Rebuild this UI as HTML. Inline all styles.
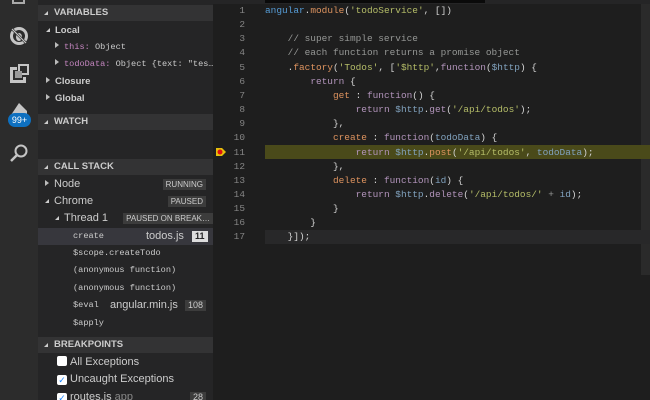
<!DOCTYPE html>
<html><head><meta charset="utf-8"><style>
*{margin:0;padding:0;box-sizing:border-box}
html,body{overflow:hidden}
body{width:650px;height:400px;background:#1e1e1e;font-family:"Liberation Sans",sans-serif;position:relative}
#act{position:absolute;left:0;top:0;width:38px;height:400px;background:#2c2c2c;overflow:hidden}
#side{position:absolute;left:38px;top:0;width:175px;height:400px;background:#252526;color:#ccc;font-size:11px;overflow:hidden}
.hdr{position:absolute;left:0;width:175px;height:16px;background:#333334;font-weight:bold;font-size:9.5px;color:#ccc;line-height:16px;padding-left:16px}
.hdr:before{content:"";position:absolute;left:6px;top:6px;border-left:4px solid transparent;border-bottom:4px solid #ccc}
.row{position:absolute;left:0;width:175px;height:17px;line-height:17px;white-space:nowrap;overflow:hidden}
.tri{display:inline-block;width:0;height:0;border-top:3px solid transparent;border-bottom:3px solid transparent;border-left:4px solid #bbb;margin-right:5px;vertical-align:1px}
.dn{display:inline-block;width:0;height:0;border-left:4px solid transparent;border-bottom:4px solid #ccc;margin-right:5px;vertical-align:1px}
.mono{font-family:"Liberation Mono",monospace;font-size:8.6px}
.badge{position:absolute;right:7px;top:3px;height:11px;line-height:11px;background:#3c3c3c;color:#ccc;font-size:8px;padding:0 3px}
.p{color:#c586c0}
#ed{position:absolute;left:213px;top:0;width:437px;height:400px;background:#1e1e1e;font-family:"Liberation Mono",monospace;font-size:9.45px;color:#d4d4d4;overflow:hidden}
.ln{position:absolute;left:0;width:32px;text-align:right;color:#858585}
.cl{position:absolute;left:52px;white-space:pre}
.k{color:#c586c0}.f{color:#ce9178}.s{color:#b5bd68}.v{color:#569cd6}.c{color:#969896}.o{color:#de935f}.pl{color:#b294bb}.b{color:#81a2be}
</style></head><body>
<div id="act">
<div style="position:absolute;left:12px;top:-6px;width:13px;height:10px;border:2px solid #aaa;border-top:none"></div>
<svg style="position:absolute;left:8px;top:25px" width="22" height="22" viewBox="0 0 22 22"><circle cx="11" cy="11" r="9" fill="#c5c5c5"/><circle cx="11" cy="11" r="6" fill="#2c2c2c"/><ellipse cx="11" cy="12" rx="3" ry="4" fill="#c5c5c5"/><line x1="4" y1="4" x2="18" y2="18" stroke="#2c2c2c" stroke-width="2.5"/><line x1="4" y1="4" x2="18" y2="18" stroke="#c5c5c5" stroke-width="1.2"/></svg>
<svg style="position:absolute;left:9px;top:64px" width="20" height="20" viewBox="0 0 20 20"><path d="M1 3h7v3h-4v10h10v-3h3v6H1z" fill="#c5c5c5"/><path d="M10 1h9v9h-9z" fill="none" stroke="#c5c5c5" stroke-width="2"/><rect x="6" y="7" width="7" height="7" fill="#999"/></svg>
<svg style="position:absolute;left:9px;top:101px" width="20" height="16" viewBox="0 0 20 16"><path d="M2 14 L10 2 L18 10 L18 14 Z" fill="#c5c5c5"/></svg>
<div style="position:absolute;left:8px;top:113px;width:23px;height:14px;border-radius:7px;background:#0e70c0;color:#fff;font-size:9px;line-height:14px;text-align:center">99+</div>
<svg style="position:absolute;left:8px;top:142px" width="22" height="22" viewBox="0 0 22 22"><circle cx="13" cy="9" r="5.5" fill="none" stroke="#c5c5c5" stroke-width="2"/><line x1="9" y1="13" x2="3" y2="19" stroke="#c5c5c5" stroke-width="2.5"/></svg>
</div>
<div id="side">
<div class="hdr" style="top:5px">VARIABLES</div>
<div class="row" style="top:22px;padding-left:8px;font-weight:bold;font-size:9.5px"><span class="dn"></span>Local</div>
<div class="row mono" style="top:39px;padding-left:17px"><span class="tri"></span><span class="p">this:</span> Object</div>
<div class="row mono" style="top:56px;padding-left:17px"><span class="tri"></span><span class="p">todoData:</span> Object {text: "tes…</div>
<div class="row" style="top:73px;padding-left:8px;font-weight:bold;font-size:9.5px"><span class="tri"></span>Closure</div>
<div class="row" style="top:90px;padding-left:8px;font-weight:bold;font-size:9.5px"><span class="tri"></span>Global</div>
<div class="hdr" style="top:114px">WATCH</div>
<div class="hdr" style="top:159px">CALL STACK</div>
<div class="row" style="top:176px;padding-left:7px"><span class="tri"></span>Node<span class="badge">RUNNING</span></div>
<div class="row" style="top:193px;padding-left:7px"><span class="dn"></span>Chrome<span class="badge">PAUSED</span></div>
<div class="row" style="top:210px;padding-left:17px"><span class="dn"></span>Thread 1<span class="badge" style="right:0">PAUSED ON BREAK…</span></div>
<div class="row" style="top:228px;background:#37373d"><span class="mono" style="position:absolute;left:35px">create</span><span style="position:absolute;left:108px">todos.js</span><span style="position:absolute;left:154px;top:3px;height:11px;line-height:11px;background:#ddd;color:#252526;font-size:9px;padding:0 3px;font-weight:bold">11</span></div>
<div class="row mono" style="top:245px;padding-left:35px">$scope.createTodo</div>
<div class="row mono" style="top:262px;padding-left:35px">(anonymous function)</div>
<div class="row mono" style="top:280px;padding-left:35px">(anonymous function)</div>
<div class="row" style="top:297px"><span class="mono" style="position:absolute;left:35px">$eval</span><span style="position:absolute;left:72px">angular.min.js</span><span class="badge" style="font-size:9px">108</span></div>
<div class="row mono" style="top:315px;padding-left:35px">$apply</div>
<div class="hdr" style="top:337px">BREAKPOINTS</div>
<div class="row" style="top:354px;padding-left:19px"><span style="display:inline-block;width:10px;height:10px;background:#fff;border-radius:2px;vertical-align:-1px;margin-right:3px"></span>All Exceptions</div>
<div class="row" style="top:371px;padding-left:19px"><span style="display:inline-block;width:10px;height:10px;background:#fff;border-radius:2px;vertical-align:-1px;margin-right:3px;color:#1a85ff;font-size:9px;line-height:10px;text-align:center">✓</span>Uncaught Exceptions</div>
<div class="row" style="top:389px;padding-left:19px;height:11px"><span style="display:inline-block;width:10px;height:10px;background:#fff;border-radius:2px;vertical-align:-1px;margin-right:3px;color:#1a85ff;font-size:9px;line-height:10px;text-align:center">✓</span>routes.js <span style="color:#888">app</span><span class="badge" style="font-size:9px">28</span></div>
</div>
<div id="ed">
<div style="position:absolute;left:0;top:0;width:437px;height:4px;background:#252526"></div>
<div style="position:absolute;left:52px;top:0;width:220px;height:3px;background:#0a0a0a"></div>
<div style="position:absolute;left:428px;top:4px;width:9px;height:271px;background:#2a2a2a"></div>
<div style="position:absolute;left:52px;top:145px;width:385px;height:14px;background:#4a4a1a"></div>
<div style="position:absolute;left:52px;top:230px;width:385px;height:14px;background:#282829"></div>
<svg style="position:absolute;left:2px;top:147px" width="12" height="10" viewBox="0 0 12 10"><path d="M1 1h6l4 4-4 4H1z" fill="#e5c00c"/><circle cx="5" cy="5" r="2.5" fill="#d11"/></svg>
<div id="code"></div>
</div>
<script>
var L=[
'<span class="v">angular</span>.<span class="o">module</span>(<span class="s">\'todoService\'</span>, [])',
'',
'    <span class="c">// super simple service</span>',
'    <span class="c">// each function returns a promise object</span>',
'    .<span class="o">factory</span>(<span class="s">\'Todos\'</span>, [<span class="s">\'$http\'</span>,<span class="pl">function</span>(<span class="b">$http</span>) {',
'        <span class="pl">return</span> {',
'            <span class="o">get</span> : <span class="pl">function</span>() {',
'                <span class="pl">return</span> <span class="b">$http</span>.<span class="pl">get</span>(<span class="s">\'/api/todos\'</span>);',
'            },',
'            <span class="o">create</span> : <span class="pl">function</span>(<span class="b">todoData</span>) {',
'                <span class="pl">return</span> <span class="b">$http</span>.<span class="o">post</span>(<span class="s">\'/api/todos\'</span>, <span class="b">todoData</span>);',
'            },',
'            <span class="o">delete</span> : <span class="pl">function</span>(<span class="b">id</span>) {',
'                <span class="pl">return</span> <span class="b">$http</span>.<span class="pl">delete</span>(<span class="s">\'/api/todos/\'</span> <span class="c">+</span> <span class="b">id</span>);',
'            }',
'        }',
'    }]);'];
var h='';for(var i=0;i<L.length;i++){var t=5+i*14.15;h+='<div class="ln" style="top:'+t+'px">'+(i+1)+'</div><div class="cl" style="top:'+t+'px">'+L[i]+'</div>';}
document.getElementById('code').innerHTML=h;
</script>
</body></html>
